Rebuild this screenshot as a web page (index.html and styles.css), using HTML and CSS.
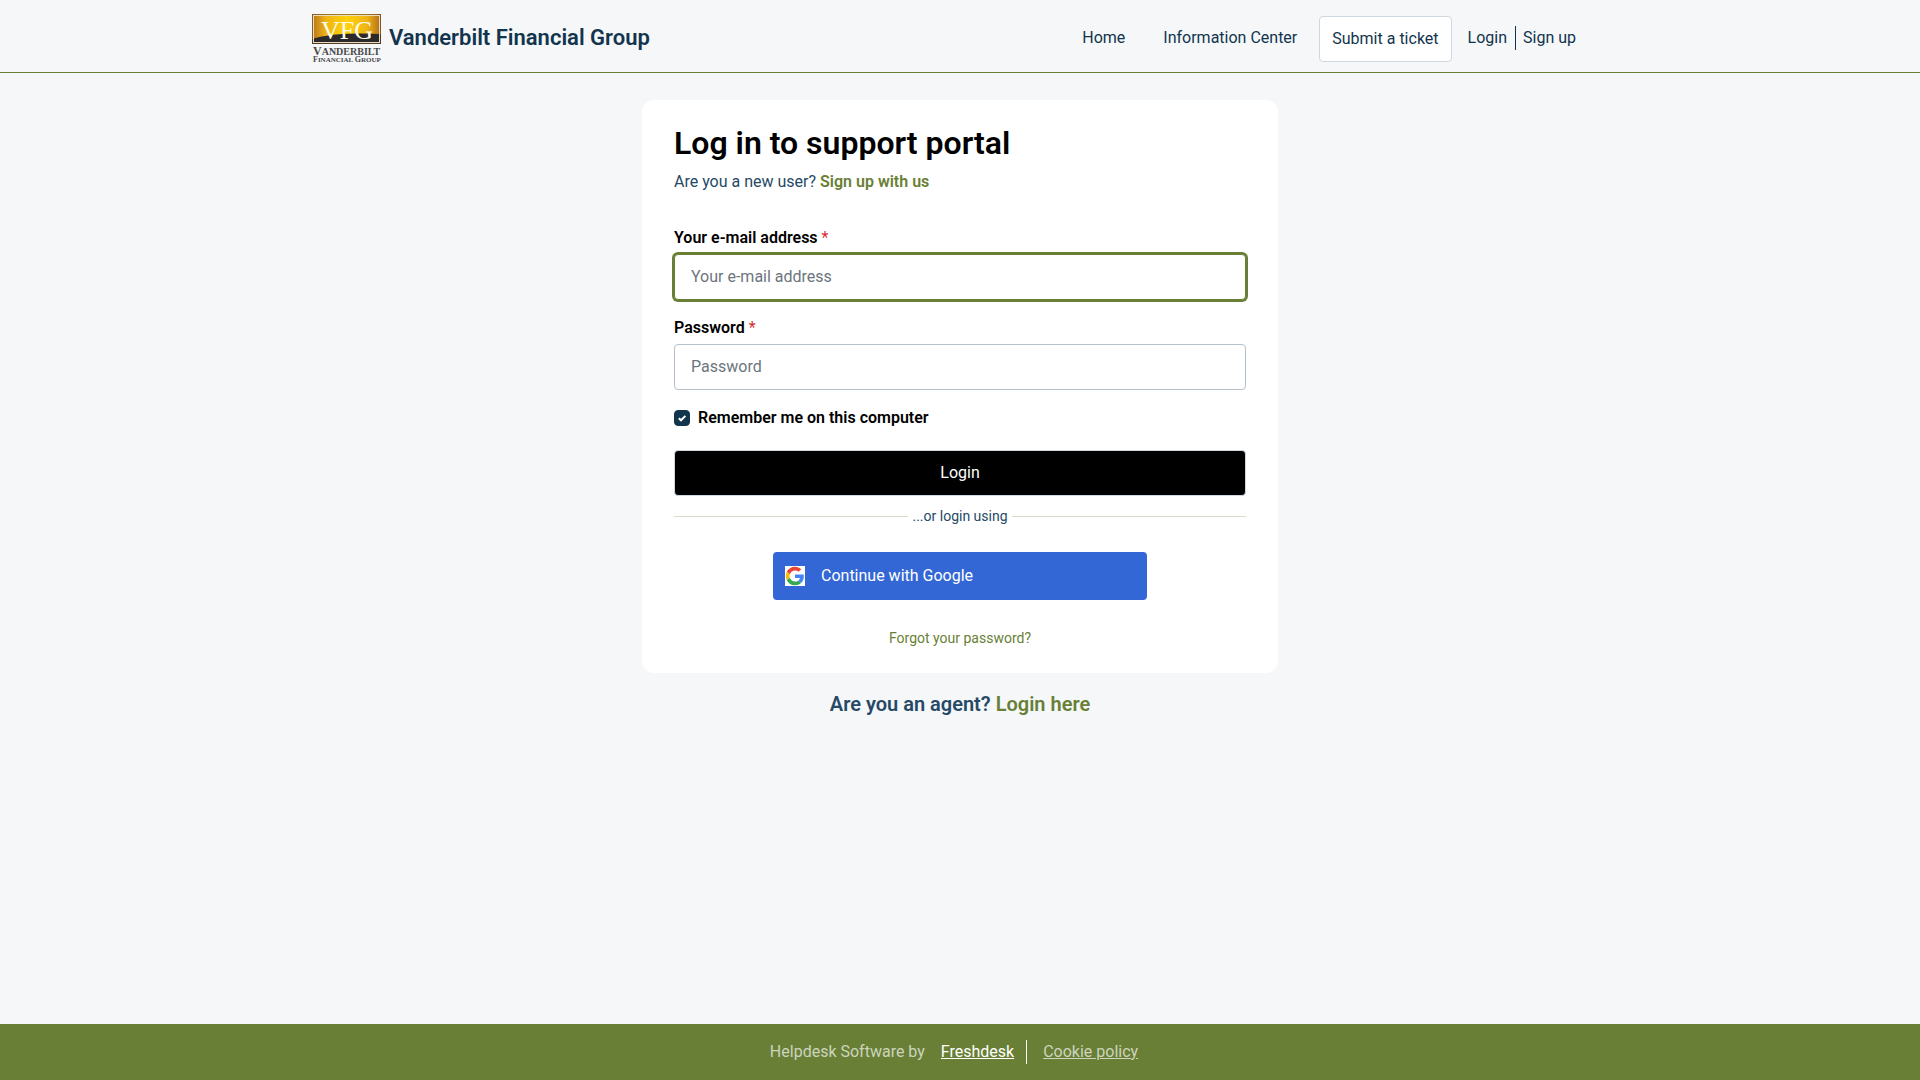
FILE: index.html
```html
<!DOCTYPE html>
<html lang="en">
<head>
<meta charset="utf-8">
<meta name="viewport" content="width=device-width, initial-scale=1">
<title>Log in : Vanderbilt Financial Group</title>
<link rel="stylesheet" href="styles.css">
</head>
<body>
<header class="header">
  <div class="container">
    <a class="brand" href="#">
      <svg class="brand-logo" width="69" height="52" viewBox="0 -1 69 52" aria-hidden="true">
        <defs>
          <linearGradient id="gold" x1="0" x2="1" y1="0" y2="0">
            <stop offset="0" stop-color="#b87420"/>
            <stop offset=".2" stop-color="#eeb414"/>
            <stop offset=".5" stop-color="#ffd10a"/>
            <stop offset=".8" stop-color="#eeb414"/>
            <stop offset="1" stop-color="#b06a1c"/>
          </linearGradient>
        </defs>
        <rect width="69" height="30" fill="url(#gold)"/>
        <path d="M0 25Q22 18 69 20V30H0Z" fill="#2b2929"/>
        <rect x="1.5" y="1.5" width="66" height="27" fill="none" stroke="#e9dcc0"/>
        <rect x=".5" y=".5" width="68" height="29" fill="none" stroke="#6b4a25" stroke-opacity=".6"/>
        <text class="logo-initials" x="35" y="25" text-anchor="middle">VFG</text>
        <text class="logo-name" x="1" y="41"><tspan class="logo-name-cap">V</tspan>ANDERBILT</text>
        <text class="logo-sub" x="1" y="48"><tspan class="logo-sub-cap">F</tspan>INANCIAL <tspan class="logo-sub-cap">G</tspan>ROUP</text>
      </svg>
      <span class="brand-name">Vanderbilt Financial Group</span>
    </a>
    <nav class="nav">
      <a class="nav-link" href="#">Home</a>
      <a class="nav-link" href="#">Information Center</a>
      <a class="ticket-button" href="#">Submit a ticket</a>
      <div class="account">
        <a class="account-link" href="#">Login</a>
        <a class="account-link" href="#">Sign up</a>
      </div>
    </nav>
  </div>
</header>
<main class="main">
  <section class="card">
    <h1 class="title">Log in to support portal</h1>
    <p class="subtitle">Are you a new user? <a class="strong-link" href="#">Sign up with us</a></p>
    <form class="form">
      <label class="label" for="email">Your e-mail address <span class="required">*</span></label>
      <input class="input input-active" id="email" type="email" placeholder="Your e-mail address">
      <label class="label" for="password">Password <span class="required">*</span></label>
      <input class="input" id="password" type="password" placeholder="Password">
      <div class="remember">
        <input class="checkbox" id="remember" type="checkbox" checked>
        <label class="remember-label" for="remember">Remember me on this computer</label>
      </div>
      <button class="login-button" type="submit">Login</button>
    </form>
    <div class="divider">...or login using</div>
    <button class="google-button" type="button">
      <svg class="google-icon" width="20" height="20" viewBox="-2 -2 52 52" aria-hidden="true">
        <rect x="-2" y="-2" width="52" height="52" fill="#fff"/>
        <path fill="#EA4335" d="M24 9.5c3.54 0 6.71 1.22 9.21 3.6l6.85-6.85C35.9 2.38 30.47 0 24 0 14.62 0 6.51 5.38 2.56 13.22l7.98 6.19C12.43 13.72 17.74 9.5 24 9.5z"/>
        <path fill="#4285F4" d="M46.98 24.55c0-1.57-.15-3.09-.38-4.55H24v9.02h12.94c-.58 2.96-2.26 5.48-4.78 7.18l7.73 6c4.51-4.18 7.09-10.36 7.09-17.65z"/>
        <path fill="#FBBC05" d="M10.53 28.59c-.48-1.45-.76-2.99-.76-4.59s.27-3.14.76-4.59l-7.98-6.19C.92 16.46 0 20.12 0 24c0 3.88.92 7.54 2.56 10.78l7.97-6.19z"/>
        <path fill="#34A853" d="M24 48c6.48 0 11.93-2.13 15.89-5.81l-7.73-6c-2.15 1.45-4.92 2.3-8.16 2.3-6.26 0-11.57-4.22-13.47-9.91l-7.98 6.19C6.51 42.62 14.62 48 24 48z"/>
      </svg>
      Continue with Google
    </button>
    <a class="forgot-link" href="#">Forgot your password?</a>
  </section>
  <p class="agent">Are you an agent? <a class="strong-link" href="#">Login here</a></p>
</main>
<footer class="footer">
  <span class="footer-muted">Helpdesk Software by</span>
  <a class="footer-link" href="#">Freshdesk</a>
  <a class="footer-policy footer-muted" href="#">Cookie policy</a>
</footer>
</body>
</html>
```
FILE: styles.css
```css
*,
*::before,
*::after {
  box-sizing: border-box;
}

body {
  margin: 0;
  min-height: 100vh;
  display: flex;
  flex-direction: column;
  background: #f5f7f9;
  color: #264966;
  font: 400 16px/24px Roboto, "Liberation Sans", sans-serif;
}

a {
  color: #687f35;
  text-decoration: none;
}

/* Header */
.header {
  border-bottom: 1px solid #687f35;
}

.container {
  max-width: 1320px;
  min-height: 72px;
  margin: 0 auto;
  padding: 0 44px 0 12px;
  display: flex;
  align-items: center;
  justify-content: space-between;
}

.brand {
  display: flex;
  align-items: center;
  gap: 8px;
  padding-top: 6px;
}

.brand-logo {
  display: block;
  font-family: "Liberation Serif", serif;
}

.brand-name {
  color: #12344d;
  font-size: 22px;
  font-weight: 600;
  padding-bottom: 2px;
}

.logo-initials {
  fill: #fffbe8;
  font-size: 26px;
}

.logo-name {
  fill: #4a4a4a;
  font-size: 10px;
  font-weight: 700;
}

.logo-name-cap {
  font-size: 12px;
}

.logo-sub {
  fill: #4a4a4a;
  font-size: 7px;
  font-weight: 700;
}

.logo-sub-cap {
  font-size: 8px;
}

.nav {
  display: flex;
  align-items: center;
  padding-top: 4px;
}

.nav-link {
  color: #12344d;
  margin-right: 38px;
}

.nav-link + .nav-link {
  margin-right: 22px;
}

.ticket-button {
  margin-top: 2px;
  padding: 10px 12px;
  border: 1px solid #cfd7df;
  border-radius: 4px;
  background: #fff;
  color: #12344d;
}

.account {
  display: flex;
  margin-left: 16px;
}

.account-link {
  color: #12344d;
}

.account-link + .account-link {
  margin-left: 8px;
  padding-left: 7px;
  border-left: 1px solid #12344d;
}

/* Login card */
.main {
  flex: 1;
  padding: 27px 12px;
}

.card {
  max-width: 636px;
  margin: 0 auto;
  padding: 24px 32px 23px;
  border-radius: 12px;
  background: #fff;
  display: flex;
  flex-direction: column;
}

.title {
  margin: 0;
  color: #000;
  font-size: 32px;
  line-height: 38px;
  font-weight: 600;
}

.subtitle {
  margin: 8px 0 32px;
}

.strong-link {
  font-weight: 600;
}

.form {
  display: flex;
  flex-direction: column;
}

.label {
  margin-bottom: 4px;
  color: #000;
  font-weight: 600;
}

.required {
  color: #d72d30;
  font-weight: 400;
}

.input {
  width: 100%;
  height: 46px;
  margin-bottom: 16px;
  padding: 0 16px 2px;
  border: 1px solid #b3bfca;
  border-radius: 4px;
  background: #fff;
  color: #12344d;
  font: inherit;
}

.input::placeholder {
  color: #6c757d;
  opacity: 1;
}

.input-active {
  border-color: #687f35;
  box-shadow: 0 0 0 2px #687f35;
}

.remember {
  display: flex;
  align-items: center;
  gap: 8px;
  margin-bottom: 20px;
}

.checkbox {
  appearance: none;
  width: 16px;
  height: 16px;
  margin: 0;
  border: 1px solid #12344d;
  border-radius: 4px;
  background: #fff;
}

.checkbox:checked {
  background: #12344d url("data:image/svg+xml,%3Csvg xmlns='http://www.w3.org/2000/svg' viewBox='0 0 14 14'%3E%3Cpath d='M3.8 7.2l2.2 2.1 4.4-4.4' fill='none' stroke='%23fff' stroke-width='2'/%3E%3C/svg%3E") center / 14px no-repeat;
}

.remember-label {
  color: #000;
  font-weight: 600;
}

.login-button {
  height: 46px;
  border: 1px solid #cfd7df;
  border-radius: 4px;
  background: #000;
  color: #fff;
  font: inherit;
}

.divider {
  display: flex;
  align-items: center;
  gap: 4px;
  margin: 8px 0 24px;
  color: #264966;
  font-size: 14px;
}

.divider::before,
.divider::after {
  content: "";
  flex: 1;
  border-top: 1px solid #d9dccb;
}

.google-button {
  align-self: center;
  width: 100%;
  max-width: 374px;
  height: 48px;
  padding: 0 12px;
  display: flex;
  align-items: center;
  gap: 16px;
  border: 0;
  border-radius: 4px;
  background: #3367d6;
  color: #fff;
  font: inherit;
}

.forgot-link {
  align-self: center;
  margin-top: 26px;
  font-size: 14px;
}

.agent {
  margin: 19px 0 0;
  font-size: 20px;
  font-weight: 600;
  text-align: center;
}

/* Footer */
.footer {
  min-height: 56px;
  padding-right: 12px;
  display: flex;
  align-items: center;
  justify-content: center;
  background: #687f35;
}

.footer-muted {
  color: #cdd4bd;
}

.footer-link {
  margin-left: 16px;
  color: #fff;
  text-decoration: underline;
}

.footer-policy {
  margin-left: 12px;
  padding-left: 16px;
  border-left: 1px solid #fff;
  text-decoration: underline;
}
```
